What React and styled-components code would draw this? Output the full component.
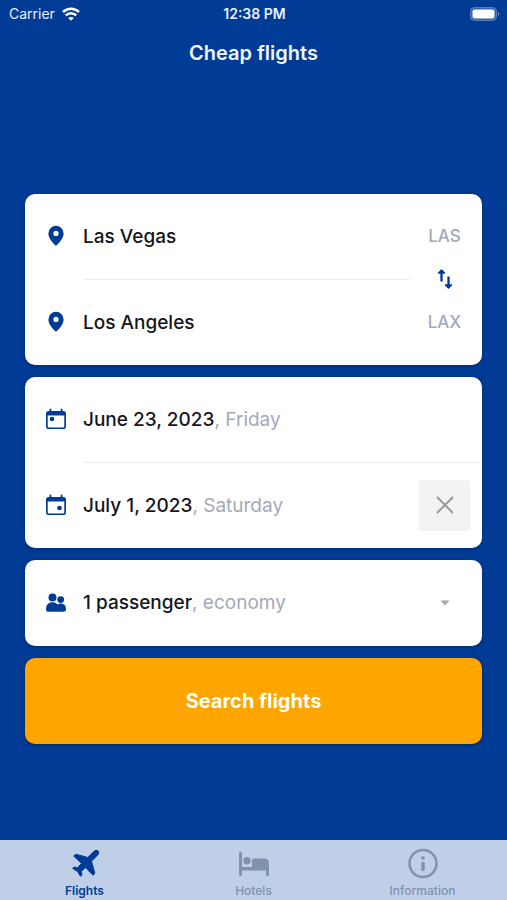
import { useState } from "react";
import styled, { createGlobalStyle } from "styled-components";

const GlobalStyle = createGlobalStyle`
    :root {
        --primary: #003b95;
        --accent: #ffa500;
        --text: #14161c;
        --muted: #a3a9b8;
        --line: #ededef;
        --tab-bar: #bfcfe8;
        --tab-muted: #8092ad;
    }

    * {
        box-sizing: border-box;
    }

    body {
        margin: 0;
        background-color: var(--primary);
        font-family: Inter, "Liberation Sans", sans-serif;
    }

    button {
        border: none;
        padding: 0;
        background: none;
        color: inherit;
        font: inherit;
        cursor: pointer;
    }
`;

const Screen = styled.div`
    display: flex;
    flex-direction: column;
    min-height: 100vh;
`;

const StatusBar = styled.div`
    display: grid;
    grid-template-columns: 1fr auto 1fr;
    align-items: center;
    height: 27px;
    padding: 0 7px 0 9px;
    color: #e9f0fb;
    font-size: 14px;
`;

const Carrier = styled.span`
    display: flex;
    align-items: center;
    gap: 7px;
`;

const Time = styled.time`
    font-weight: 600;
`;

const Battery = styled.svg`
    justify-self: end;
`;

const Header = styled.header`
    display: flex;
    align-items: center;
    justify-content: center;
    height: 52px;
`;

const Title = styled.h1`
    margin: 0;
    color: #f1f5fc;
    font-size: 20px;
    font-weight: 600;
`;

const Main = styled.main`
    flex: 1;
    display: flex;
    flex-direction: column;
    justify-content: center;
    padding: 18px 25px 0;
`;

const Form = styled.form`
    display: flex;
    flex-direction: column;
    gap: 12px;
`;

const Card = styled.section`
    border-radius: 10px;
    background-color: #fff;
    box-shadow: 0 1px 4px rgba(0, 0, 0, 0.25);
`;

const Row = styled.div`
    display: flex;
    align-items: center;
    height: ${({ $single }) => ($single ? "86px" : "85px")};
    padding-right: 12px;
`;

const Field = styled.button`
    flex: 1;
    display: flex;
    align-items: center;
    gap: 15px;
    height: 100%;
    padding-left: 19px;
    color: var(--text);
    font-size: 19px;
    font-weight: 500;
    text-align: left;
`;

const FieldIcon = styled.svg`
    flex: none;
    color: var(--primary);
`;

const Value = styled.span`
    flex: 1;
`;

const Hint = styled.span`
    color: var(--muted);
    font-weight: 400;
`;

const Slot = styled.span`
    display: flex;
    justify-content: center;
    width: 51px;
    color: var(--muted);
    font-size: 17px;
`;

const Divider = styled.div`
    display: flex;
    align-items: center;
    height: 1px;
    padding: 0 ${({ $end }) => $end}px 0 58px;
`;

const Line = styled.span`
    flex: 1;
    height: 1px;
    background-color: var(--line);
`;

const IconButton = styled.button`
    display: flex;
    align-items: center;
    justify-content: center;
    width: 51px;
    height: 51px;
    border-radius: 3px;
`;

const SwapButton = styled(IconButton)`
    flex: none;
    margin-left: 9px;
    color: var(--primary);
`;

const ClearButton = styled(IconButton)`
    background-color: #f3f3f3;
    color: #999;
`;

const SearchButton = styled.button`
    height: 86px;
    border-radius: 10px;
    background-color: var(--accent);
    box-shadow: 0 1px 4px rgba(0, 0, 0, 0.35);
    color: #fff;
    font-size: 20px;
    font-weight: 700;
`;

const TabBar = styled.nav`
    display: grid;
    grid-template-columns: repeat(3, 1fr);
    height: 60px;
    background-color: var(--tab-bar);
`;

const Tab = styled.a`
    display: flex;
    flex-direction: column;
    align-items: center;
    gap: 3px;
    padding-top: 8px;
    color: ${({ $active }) => ($active ? "var(--primary)" : "var(--tab-muted)")};
    font-size: 12px;
    font-weight: ${({ $active }) => ($active ? 600 : 500)};
    line-height: 16px;
    text-decoration: none;
`;

function WifiIcon() {
    return (
        <svg width="18" height="14" viewBox="0 0 18 14" fill="none" stroke="#fff" strokeWidth="2.5" aria-hidden="true">
            <path d="M1 5C5.500.6 12.500.6 17 5" />
            <path d="M3.800 8.400c2.900-2.900 7.500-2.900 10.400 0" />
            <path d="M9 13.800 6.200 11c1.600-1.500 4-1.500 5.600 0z" fill="#fff" stroke="none" />
        </svg>
    );
}

function BatteryIcon() {
    return (
        <Battery width="31" height="14" viewBox="0 0 31 14" aria-hidden="true">
            <rect x="1.500" y=".6" width="26" height="12.800" rx="3.800" fill="#3562ab" stroke="#5f85c0" strokeWidth="1" />
            <rect x="3.500" y="2.500" width="22" height="9" rx="2" fill="#fff" />
            <path d="M29 4.800c1.700.7 1.700 3.700 0 4.400z" fill="#6f91c7" />
        </Battery>
    );
}

function PinIcon() {
    return (
        <FieldIcon width="24" height="24" viewBox="0 0 24 24" fill="currentColor" aria-hidden="true">
            <path
                fillRule="evenodd"
                d="M12 1.800a7.600 7.600 0 0 0-7.600 7.600C4.400 14.500 9 18.800 12 21.800c3-3 7.600-7.300 7.600-12.400A7.600 7.600 0 0 0 12 1.800zm0 5a2.600 2.600 0 1 1 0 5.200 2.600 2.600 0 0 1 0-5.200z"
            />
        </FieldIcon>
    );
}

function CalendarIcon({ end }) {
    return (
        <FieldIcon width="24" height="24" viewBox="0 0 24 24" fill="currentColor" aria-hidden="true">
            <path
                fillRule="evenodd"
                d="M5.500 2.500a.9.9 0 0 1 1.800 0V4h9.400V2.500a.9.9 0 0 1 1.800 0V4h.7A2.800 2.800 0 0 1 22 6.800v12.400a2.800 2.800 0 0 1-2.800 2.800H4.800A2.800 2.800 0 0 1 2 19.200V6.800A2.800 2.800 0 0 1 4.800 4h.7zM3.700 8.500v10.700c0 .7.5 1.200 1.200 1.200h14.200c.7 0 1.200-.5 1.200-1.200V8.500z"
            />
            <circle cx={end ? 15.5 : 8} cy={end ? 15 : 12} r="2.3" />
        </FieldIcon>
    );
}

function PeopleIcon() {
    return (
        <FieldIcon width="24" height="24" viewBox="0 0 24 24" fill="currentColor" aria-hidden="true">
            <circle cx="8.500" cy="6.400" r="4" />
            <circle cx="16.700" cy="8.600" r="3.400" />
            <path d="M2 18.200C2 14 4.500 11.300 8.500 11.300c2.200 0 3.900.8 5 2.200.9-.6 2-.9 3.200-.9 3.300 0 5.300 2.200 5.300 5.500 0 1.800-.9 2.700-2.500 2.700h-15C2.900 20.800 2 19.900 2 18.200z" />
        </FieldIcon>
    );
}

function SwapIcon() {
    return (
        <svg width="20" height="22" viewBox="0 0 20 22" fill="none" stroke="currentColor" strokeWidth="2.3" aria-hidden="true">
            <path d="M6.500 13.500V3M13.500 8.500V19" />
            <path d="M3.500 5 6.500 2l3 3zM10.500 17l3 3 3-3z" fill="currentColor" strokeWidth="1.500" strokeLinejoin="round" />
        </svg>
    );
}

function CloseIcon() {
    return (
        <svg width="18" height="18" viewBox="0 0 18 18" stroke="currentColor" strokeWidth="2" aria-hidden="true">
            <path d="M1 1l16 16M17 1 1 17" />
        </svg>
    );
}

function CaretIcon() {
    return (
        <svg width="10" height="6" viewBox="0 0 10 6" fill="currentColor" aria-hidden="true">
            <path d="M.5.5h9L5 5.500z" />
        </svg>
    );
}

function PlaneIcon() {
    return (
        <svg
            width="32"
            height="32"
            viewBox="0 0 32 32"
            fill="currentColor"
            stroke="currentColor"
            strokeLinejoin="round"
            aria-hidden="true"
        >
            <path d="M24.500 3.800c1.500-1.500 3.500-1.900 4.600-.9 1 1.100.6 3.100-.9 4.600L22.500 13.200 25.800 25.200 24 27.300 16.600 19.500 12.200 23.500 13 26.800 11.500 28.300 8.500 23.500 3.700 20.500 5.200 19 8.500 19.800 12.500 15.400 4.700 8 6.800 6.200 18.800 9.500z" />
        </svg>
    );
}

function BedIcon() {
    return (
        <svg width="32" height="32" viewBox="0 0 32 32" fill="currentColor" aria-hidden="true">
            <path d="M1 5a1.500 1.500 0 0 1 3 0v14h24v-1h3v8.500a1.500 1.500 0 0 1-3 0V22.500H4v4a1.500 1.500 0 0 1-3 0z" />
            <circle cx="9" cy="12.700" r="3.700" />
            <path d="M14 19v-6.500a2 2 0 0 1 2-2h10.500a4.500 4.500 0 0 1 4.500 4.500v4z" />
        </svg>
    );
}

function InfoIcon() {
    return (
        <svg width="32" height="32" viewBox="0 0 32 32" fill="none" stroke="currentColor" aria-hidden="true">
            <circle cx="16" cy="15.500" r="13.500" strokeWidth="2.500" />
            <path d="M16 15.500v6" strokeWidth="3.500" strokeLinecap="round" />
            <circle cx="16" cy="9.800" r="1.900" fill="currentColor" stroke="none" />
        </svg>
    );
}

function PlaceRow({ place }) {
    return (
        <Row>
            <Field type="button">
                <PinIcon />
                <Value>{place.city}</Value>
                <Slot>{place.code}</Slot>
            </Field>
        </Row>
    );
}

export default function App() {
    const [places, setPlaces] = useState([
        { city: "Las Vegas", code: "LAS" },
        { city: "Los Angeles", code: "LAX" },
    ]);
    const [hasReturn, setHasReturn] = useState(true);

    return (
        <>
            <GlobalStyle />
            <Screen>
                <StatusBar>
                    <Carrier>
                        Carrier
                        <WifiIcon />
                    </Carrier>
                    <Time>12:38 PM</Time>
                    <BatteryIcon />
                </StatusBar>

                <Header>
                    <Title>Cheap flights</Title>
                </Header>

                <Main>
                    <Form onSubmit={(event) => event.preventDefault()}>
                        <Card>
                            <PlaceRow place={places[0]} />
                            <Divider $end={12}>
                                <Line />
                                <SwapButton
                                    type="button"
                                    aria-label="Swap cities"
                                    onClick={() => setPlaces([places[1], places[0]])}
                                >
                                    <SwapIcon />
                                </SwapButton>
                            </Divider>
                            <PlaceRow place={places[1]} />
                        </Card>

                        <Card>
                            <Row>
                                <Field type="button">
                                    <CalendarIcon />
                                    <Value>
                                        June 23, 2023<Hint>, Friday</Hint>
                                    </Value>
                                </Field>
                            </Row>
                            {hasReturn && (
                                <>
                                    <Divider $end={2}>
                                        <Line />
                                    </Divider>
                                    <Row>
                                        <Field type="button">
                                            <CalendarIcon end />
                                            <Value>
                                                July 1, 2023<Hint>, Saturday</Hint>
                                            </Value>
                                        </Field>
                                        <ClearButton
                                            type="button"
                                            aria-label="Clear return date"
                                            onClick={() => setHasReturn(false)}
                                        >
                                            <CloseIcon />
                                        </ClearButton>
                                    </Row>
                                </>
                            )}
                        </Card>

                        <Card>
                            <Row $single>
                                <Field type="button" aria-haspopup="dialog">
                                    <PeopleIcon />
                                    <Value>
                                        1 passenger<Hint>, economy</Hint>
                                    </Value>
                                    <Slot>
                                        <CaretIcon />
                                    </Slot>
                                </Field>
                            </Row>
                        </Card>

                        <SearchButton type="submit">Search flights</SearchButton>
                    </Form>
                </Main>

                <TabBar>
                    <Tab href="#flights" $active aria-current="page">
                        <PlaneIcon />
                        Flights
                    </Tab>
                    <Tab href="#hotels">
                        <BedIcon />
                        Hotels
                    </Tab>
                    <Tab href="#information">
                        <InfoIcon />
                        Information
                    </Tab>
                </TabBar>
            </Screen>
        </>
    );
}
